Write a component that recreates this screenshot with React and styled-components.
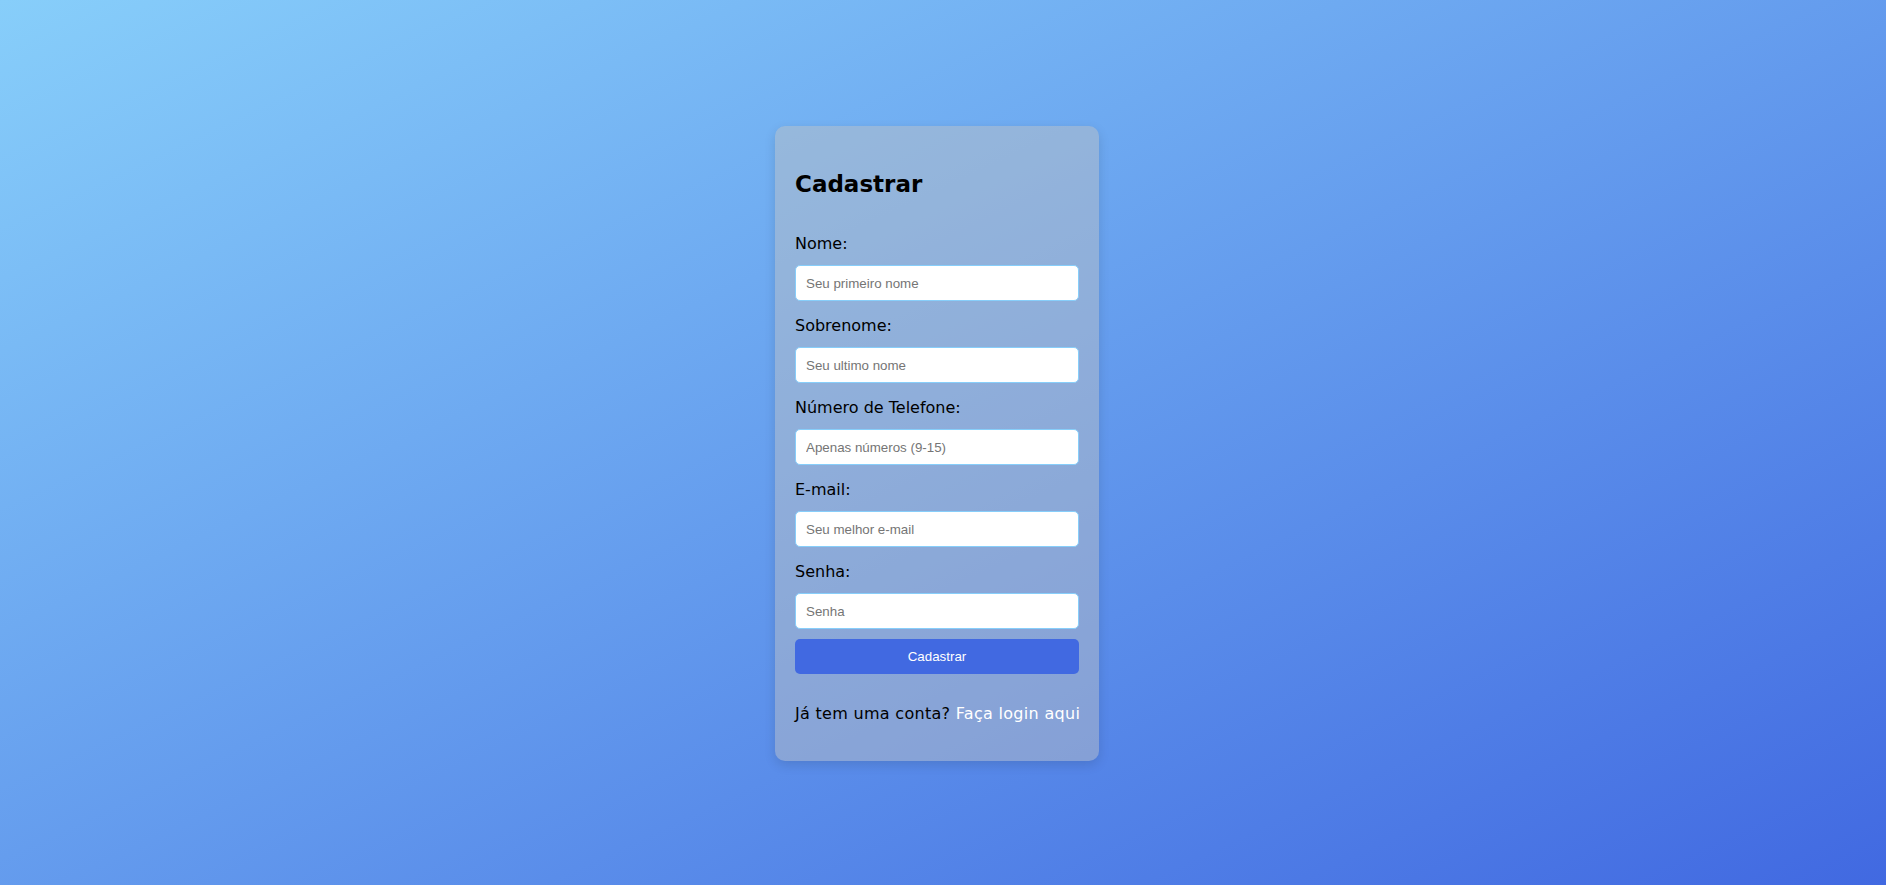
import React from "react";
import styled, { createGlobalStyle } from "styled-components";

const GlobalStyle = createGlobalStyle`
	* {
		box-sizing: border-box;
	}
	html, body {
		margin: 0;
		padding: 0;
	}
	body {
		font-family: "DejaVu Sans", "Noto Sans", sans-serif;
	}
`;

const Page = styled.div`
	min-height: 100vh;
	display: flex;
	align-items: center;
	justify-content: center;
	padding: 2px 12px 0 0;
	background: linear-gradient(to bottom right, #87cefa, #4169e1);
`;

const Card = styled.div`
	width: 324px;
	padding: 44px 20px 37px;
	border-radius: 10px;
	background: rgba(192, 192, 192, 0.45);
	box-shadow: 0 4px 12px rgba(0, 0, 0, 0.12);
	display: flex;
	flex-direction: column;
`;

const Title = styled.h2`
	margin: 0 0 36px;
	font-family: "DejaVu Sans", sans-serif;
	font-size: 23px;
	font-weight: 700;
	line-height: 28px;
	color: #000;
`;

const Form = styled.form`
	display: flex;
	flex-direction: column;
`;

const Label = styled.label`
	display: block;
	margin: ${props => (props.$first ? "0" : "15px")} 0 11px;
	font-family: "DejaVu Sans", sans-serif;
	font-size: 16px;
	line-height: 20px;
	color: #000;
`;

const Input = styled.input`
	width: 100%;
	height: 36px;
	padding: 0 10px;
	border: 1px solid #87cefa;
	border-radius: 5px;
	background: #fff;
	font-family: "Liberation Sans", Arial, sans-serif;
	font-size: 13.333px;
	color: #000;
	outline: none;

	&::placeholder {
		color: #757575;
	}
`;

const Submit = styled.button`
	width: 100%;
	height: 35px;
	margin-top: 10px;
	border: none;
	border-radius: 5px;
	background: #4169e1;
	color: #fff;
	font-family: "Liberation Sans", Arial, sans-serif;
	font-size: 13.333px;
	cursor: pointer;
`;

const Footer = styled.p`
	margin: 30px 0 0;
	font-family: "DejaVu Sans", sans-serif;
	font-size: 16px;
	line-height: 20px;
	letter-spacing: 0.3px;
	color: #000;
	white-space: nowrap;
`;

const Link = styled.a`
	color: #fff;
	text-decoration: none;
`;

const fields = [
	{ id: "nome", label: "Nome:", type: "text", placeholder: "Seu primeiro nome" },
	{ id: "sobrenome", label: "Sobrenome:", type: "text", placeholder: "Seu ultimo nome" },
	{ id: "telefone", label: "Número de Telefone:", type: "tel", placeholder: "Apenas números (9-15)" },
	{ id: "email", label: "E-mail:", type: "email", placeholder: "Seu melhor e-mail" },
	{ id: "senha", label: "Senha:", type: "password", placeholder: "Senha" }
];

export default function App() {
	return (
		<>
			<GlobalStyle />
			<Page>
				<Card>
					<Title>Cadastrar</Title>
					<Form onSubmit={e => e.preventDefault()}>
						{fields.map((f, i) => (
							<React.Fragment key={f.id}>
								<Label htmlFor={f.id} $first={i === 0}>
									{f.label}
								</Label>
								<Input id={f.id} type={f.type} placeholder={f.placeholder} />
							</React.Fragment>
						))}
						<Submit type="submit">Cadastrar</Submit>
					</Form>
					<Footer>
						Já tem uma conta? <Link href="#">Faça login aqui</Link>
					</Footer>
				</Card>
			</Page>
		</>
	);
}
